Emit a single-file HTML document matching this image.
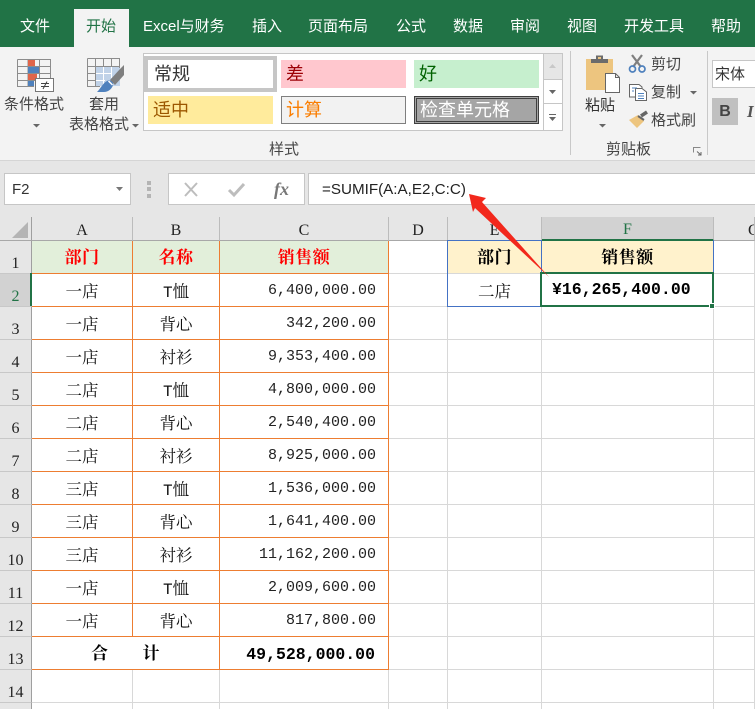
<!DOCTYPE html>
<html lang="zh"><head><meta charset="utf-8"><title>Excel</title>
<style>
html,body{margin:0;padding:0;background:#fff}
#w{position:relative;width:755px;height:709px;overflow:hidden;font-family:"Liberation Sans","Noto Sans CJK SC",sans-serif;background:#e6e6e6}
.a{position:absolute;white-space:nowrap}
.tab{position:absolute;top:16px;font-size:15px;line-height:22px;color:#fff;white-space:nowrap}
#rb{position:absolute;left:0;top:47px;width:755px;height:113px;background:#f3f3f3;border-bottom:1px solid #d5d5d5}
.l{position:absolute;font-size:15px;line-height:20px;color:#444;white-space:nowrap}
.st{position:absolute;width:125px;height:28px;box-sizing:border-box;font-size:18px;line-height:29px;padding-left:5px;white-space:nowrap}
table{position:absolute;left:0;top:217px;border-collapse:separate;border-spacing:0;table-layout:fixed;width:755px;background:#fff}
td{padding:7px 0 0;box-sizing:border-box;border-right:1px solid #d8d8d8;border-bottom:1px solid #d8d8d8;height:33px;text-align:center;vertical-align:top;font-family:"Liberation Serif","Noto Serif CJK SC",serif;font-size:16.500px;color:#111;overflow:hidden;white-space:nowrap;line-height:22px}
td.h{padding:0;background:#e6e6e6;border-right:1px solid #bcbcbc;border-bottom:1px solid #a8a8a8;height:24px;font-size:16px;line-height:18px;color:#222;vertical-align:bottom}
td.r{padding:0;background:#e6e6e6;border-right:1px solid #9f9f9f;border-bottom:1px solid #c8c8c8;font-size:16px;line-height:18px;vertical-align:bottom;color:#222}
td.o{border-right:1px solid #ed7d31;border-bottom:1px solid #ed7d31}
td.t{padding-top:6px;background:#e2efda;color:#f00;font-weight:bold;font-size:17px;letter-spacing:.5px}
td.n{text-align:right;padding-top:6px;padding-right:12px;font-family:"Liberation Mono",monospace;font-size:15px;color:#222}
td.b{padding-top:6px;font-weight:bold;font-size:17px;letter-spacing:.5px;color:#000}
td.y{padding-top:6px;background:#fff2cc;font-weight:bold;font-size:17px;letter-spacing:.5px;color:#000}
.m{font-family:"Liberation Mono",monospace;font-size:16px}
</style></head><body><div id="w">
<div class="a" style="left:0;top:0;width:755px;height:47px;background:#217346"></div>
<div class="a" style="left:74px;top:9px;width:55px;height:38px;background:#f3f3f3"></div>
<div class="tab" style="left:20px">文件</div>
<div class="tab" style="left:86px;color:#217346">开始</div>
<div class="tab" style="left:143px">Excel与财务</div>
<div class="tab" style="left:252px">插入</div>
<div class="tab" style="left:308px">页面布局</div>
<div class="tab" style="left:396px">公式</div>
<div class="tab" style="left:453px">数据</div>
<div class="tab" style="left:510px">审阅</div>
<div class="tab" style="left:567px">视图</div>
<div class="tab" style="left:624px">开发工具</div>
<div class="tab" style="left:711px">帮助</div>

<div id="rb"></div>
<!-- style gallery -->
<div class="a" style="left:143px;top:53px;width:420px;height:78px;box-sizing:border-box;background:#fff;border:1px solid #c6c6c6"></div>
<div class="a" style="left:144px;top:56px;width:133px;height:36px;box-sizing:border-box;border:4px solid #c6c6c6;background:#fff"></div>
<div class="st" style="left:148px;top:60px;color:#333;padding-left:6px">常规</div>
<div class="st" style="left:281px;top:60px;background:#ffc7ce;color:#9c0006">差</div>
<div class="st" style="left:414px;top:60px;background:#c6efce;color:#006100">好</div>
<div class="st" style="left:148px;top:96px;background:#ffeb9c;color:#9c5700">适中</div>
<div class="st" style="left:281px;top:96px;background:#f2f2f2;border:1px solid #7f7f7f;color:#fa7d00;padding-left:4px;line-height:27px">计算</div>
<div class="st" style="left:414px;top:96px;background:#a5a5a5;border:3px double #3f3f3f;color:#fff;padding-left:3px;line-height:23px">检查单元格</div>

<svg class="a" style="left:0;top:0" width="755" height="160" viewBox="0 0 755 160">
 <!-- scroll buttons -->
 <rect x="544" y="54" width="18" height="25" fill="#e6e6e6"/>
 <path d="M544 79.500H562M544 103.500H562M543.500 54V131" stroke="#c6c6c6" fill="none"/>
 <path d="M549 68h7l-3.500-4z" fill="#c8c8c8"/>
 <path d="M549 90h7l-3.500 4z" fill="#666"/>
 <path d="M549 114.500h7" stroke="#666"/><path d="M549 117h7l-3.500 4z" fill="#666"/>
 <!-- dividers -->
 <path d="M570.500 51V155M707.500 51V155" stroke="#c8c8c8"/>
 <!-- conditional format icon -->
 <path d="M17.500 59.500H50.500V80M34 86.500H17.500V59.500M17.500 66.500H50.500M17.500 73.500H50.500M17.500 80.500H36M28 60V86M39.500 60V78" stroke="#8c8c8c" fill="none"/>
 <rect x="28" y="60" width="7" height="6" fill="#e0654a"/>
 <rect x="28" y="67" width="11" height="6" fill="#4f81bd"/>
 <rect x="28" y="74" width="9" height="6" fill="#e0654a"/>
 <rect x="28" y="81" width="6" height="5" fill="#4f81bd"/>
 <rect x="35.500" y="78.500" width="18" height="13" fill="#fff" stroke="#777"/>
 <path d="M41 83.500H49M41 86.500H49M47 81.500L43 89" stroke="#444" fill="none"/>
 <path d="M33 124h7l-3.500 3.500z" fill="#666"/>
 <!-- table format icon -->
 <rect x="95" y="66" width="25" height="20" fill="#c0d2e8"/>
 <path d="M87.500 58.500H119.500V68M100 86.500H87.500V58.500M87.500 66.500H95M87.500 73.500H95M87.500 80.500H95M95.500 59V86M103.500 59V66M111.500 59V66M95 66.500H120" stroke="#8c8c8c" fill="none"/>
 <path d="M103.500 67V86M111.500 67V78M96 73.500H112M96 80.500H105" stroke="#fff" fill="none"/>
 <path d="M120 69L124 65L124 75L115 85L110 80z" fill="#7f7f7f"/>
 <path d="M97 92C101 88 103 83 107 81C110 79 114 82 113 85C112 89 108 92 104 92z" fill="#4f81bd"/>
 <path d="M108.500 81L112.500 85" stroke="#fff" stroke-width="1.500"/>
 <path d="M132 124h7l-3.500 3.500z" fill="#666"/>
 <!-- paste icon -->
 <path d="M586 59H613V73H605V90H586z" fill="#edc57f"/>
 <path d="M591 63V59H596V55.500H603V59H608V63z" fill="#6b6b6b"/>
 <rect x="598" y="57" width="3" height="2" fill="#edc57f"/>
 <path d="M605.500 73.500H615.500L619.500 77.500V92.500H605.500zM615.500 73.500V77.500H619.500" fill="#fff" stroke="#666"/>
 <path d="M599 124h7l-3.500 3.500z" fill="#666"/>
 <!-- scissors -->
 <path d="M632 55L641 67M642 55L633 67" stroke="#7f7f7f" stroke-width="2.200" fill="none"/>
 <circle cx="632.500" cy="69" r="3" fill="none" stroke="#4f81bd" stroke-width="1.700"/>
 <circle cx="642" cy="69" r="3" fill="none" stroke="#4f81bd" stroke-width="1.700"/>
 <!-- copy -->
 <path d="M629.500 84.500H639L642 87V97H629.500z" fill="#fff" stroke="#666"/>
 <path d="M635.500 88.500H642L646.500 92V100.500H635.500z" fill="#fff" stroke="#666"/>
 <path d="M632 88H637M632 91H634M638 93.500H644M638 96H644M638 98.500H644" stroke="#4f81bd"/>
 <path d="M690 91h7l-3.500 3.500z" fill="#666"/>
 <!-- format painter -->
 <path d="M629 120L638 115L644 121L637 128z" fill="#edc57f"/>
 <path d="M638 116L644 120" stroke="#666" stroke-width="2"/>
 <path d="M641 116L647 112" stroke="#666" stroke-width="3.500"/>
 <!-- launcher -->
 <path d="M693.500 152.500V147.500H700.500" stroke="#888" fill="none"/>
 <path d="M697 151.500L701 155M698 155H701V152" stroke="#666" fill="none"/>
</svg>

<div class="l" style="left:4px;top:95px">条件格式</div>
<div class="l" style="left:89px;top:95px">套用</div>
<div class="l" style="left:69px;top:115px">表格格式</div>
<div class="l" style="left:269px;top:140px">样式</div>
<div class="l" style="left:585px;top:96px;color:#333">粘贴</div>
<div class="l" style="left:651px;top:55px">剪切</div>
<div class="l" style="left:651px;top:83px">复制</div>
<div class="l" style="left:651px;top:111px">格式刷</div>
<div class="l" style="left:606px;top:140px">剪贴板</div>
<div class="a" style="left:712px;top:60px;width:60px;height:28px;box-sizing:border-box;background:#fff;border:1px solid #c6c6c6;font-size:15px;line-height:28px;padding-left:2px;color:#333">宋体</div>
<div class="a" style="left:712px;top:98px;width:26px;height:27px;background:#c0c0c0;color:#444;font-weight:bold;font-size:16px;line-height:27px;text-align:center">B</div>
<div class="a" style="left:747px;top:98px;color:#555;font:italic bold 17px/27px 'Liberation Serif',serif">I</div>

<!-- formula bar -->
<div class="a" style="left:4px;top:173px;width:127px;height:32px;box-sizing:border-box;background:#fff;border:1px solid #c6c6c6;font-size:15px;line-height:32px;padding-left:7px;color:#333">F2</div>
<div class="a" style="left:168px;top:173px;width:137px;height:32px;box-sizing:border-box;background:#fff;border:1px solid #c6c6c6"></div>
<div class="a" style="left:308px;top:173px;width:460px;height:32px;box-sizing:border-box;background:#fff;border:1px solid #c6c6c6;font-size:15.200px;line-height:31px;padding-left:13px;color:#222">=SUMIF(A:A,E2,C:C)</div>
<svg class="a" style="left:0;top:165px" width="310" height="50" viewBox="0 165 310 50">
 <path d="M116 187h7l-3.500 4z" fill="#777"/>
 <path d="M147 181h4v4h-4zM147 187h4v4h-4zM147 194h4v4h-4z" fill="#b4b4b4"/>
 <path d="M185 183L197 196M197 183L185 196" stroke="#bdbdbd" stroke-width="2" fill="none"/>
 <path d="M229 190L234 195L244 184" stroke="#bdbdbd" stroke-width="3" fill="none"/>
 <text x="274" y="195" font-family="Liberation Serif,serif" font-style="italic" font-weight="bold" font-size="18" fill="#777">fx</text>
</svg>

<!-- sheet -->
<table>
<colgroup><col style="width:32px"><col style="width:101px"><col style="width:87px"><col style="width:169px"><col style="width:59px"><col style="width:94px"><col style="width:172px"><col style="width:41px"></colgroup>
<tr><td class="h" style="border-right-color:#9f9f9f"></td><td class="h">A</td><td class="h">B</td><td class="h">C</td><td class="h">D</td><td class="h">E</td><td class="h" style="background:#d2d2d2;color:#217346;border-bottom:2px solid #217346">F</td><td class="h" style="text-align:left;padding-left:34px">G</td></tr>
<tr><td class="r">1</td><td class="o t">部门</td><td class="o t">名称</td><td class="o t">销售额</td><td></td><td class="y">部门</td><td class="y">销售额</td><td></td></tr>
<tr><td class="r" style="background:#d2d2d2;color:#217346">2</td><td class="o">一店</td><td class="o"><span class="m">T</span>恤</td><td class="o n">6,400,000.00</td><td></td><td>二店</td><td></td><td></td></tr>
<tr><td class="r">3</td><td class="o">一店</td><td class="o">背心</td><td class="o n">342,200.00</td><td></td><td></td><td></td><td></td></tr>
<tr><td class="r">4</td><td class="o">一店</td><td class="o">衬衫</td><td class="o n">9,353,400.00</td><td></td><td></td><td></td><td></td></tr>
<tr><td class="r">5</td><td class="o">二店</td><td class="o"><span class="m">T</span>恤</td><td class="o n">4,800,000.00</td><td></td><td></td><td></td><td></td></tr>
<tr><td class="r">6</td><td class="o">二店</td><td class="o">背心</td><td class="o n">2,540,400.00</td><td></td><td></td><td></td><td></td></tr>
<tr><td class="r">7</td><td class="o">二店</td><td class="o">衬衫</td><td class="o n">8,925,000.00</td><td></td><td></td><td></td><td></td></tr>
<tr><td class="r">8</td><td class="o">三店</td><td class="o"><span class="m">T</span>恤</td><td class="o n">1,536,000.00</td><td></td><td></td><td></td><td></td></tr>
<tr><td class="r">9</td><td class="o">三店</td><td class="o">背心</td><td class="o n">1,641,400.00</td><td></td><td></td><td></td><td></td></tr>
<tr><td class="r">10</td><td class="o">三店</td><td class="o">衬衫</td><td class="o n">11,162,200.00</td><td></td><td></td><td></td><td></td></tr>
<tr><td class="r">11</td><td class="o">一店</td><td class="o"><span class="m">T</span>恤</td><td class="o n">2,009,600.00</td><td></td><td></td><td></td><td></td></tr>
<tr><td class="r">12</td><td class="o">一店</td><td class="o">背心</td><td class="o n">817,800.00</td><td></td><td></td><td></td><td></td></tr>
<tr><td class="r">13</td><td class="o b" colspan="2">合<span style="display:inline-block;width:34px"></span>计</td><td class="o n" style="font-weight:bold;font-size:16.500px;color:#000;padding-top:7px;padding-right:13px">49,528,000.00</td><td></td><td></td><td></td><td></td></tr>
<tr><td class="r">14</td><td></td><td></td><td></td><td></td><td></td><td></td><td></td></tr>
<tr><td class="r">15</td><td></td><td></td><td></td><td></td><td></td><td></td><td></td></tr>
</table>

<svg class="a" style="left:0;top:217px" width="32" height="24" viewBox="0 217 32 24"><path d="M28 222V238H12z" fill="#b4b4b4"/></svg>
<div class="a" style="left:30px;top:273px;width:2px;height:33px;background:#217346"></div>
<!-- blue reference range -->
<div class="a" style="left:447px;top:240px;width:95px;height:67px;box-sizing:border-box;border:1px solid #4472c4"></div>
<div class="a" style="left:541px;top:240px;width:173px;height:34px;box-sizing:border-box;border:1px solid #4472c4;border-top:0"></div>
<!-- active cell -->
<div class="a" style="left:540px;top:272px;width:174px;height:35px;box-sizing:border-box;border:2px solid #217346;background:#fff;font:bold 16.500px/29px 'Liberation Mono',monospace;padding:1px 0 0 10px;color:#000">¥16,265,400.00</div>
<div class="a" style="left:709px;top:303px;width:4px;height:4px;background:#217346;border:1px solid #fff"></div>
<!-- red arrow -->
<svg class="a" style="left:0;top:0" width="755" height="709" viewBox="0 0 755 709"><polygon points="469,194 486,198 482,202 549,277 475,208 473,212" fill="#f2281c"/></svg>
</div></body></html>
